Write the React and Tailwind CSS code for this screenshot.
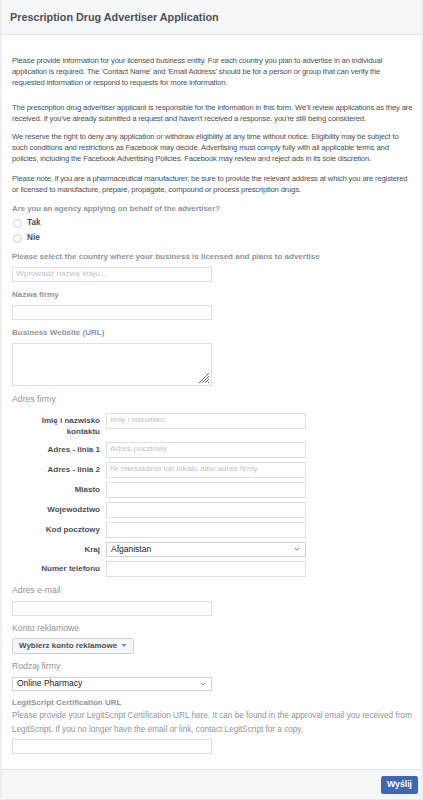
import { ChevronDown } from 'lucide-react';

const font = "font-['Liberation_Sans',Arial,sans-serif]";

const Label = ({ children, bold = true, size, className = '' }) => (
  <div
    className={`leading-[11px] text-[#90949c] ${bold ? 'font-bold' : ''} ${size || (bold ? 'text-[8px]' : 'text-[8.7px]')} ${className}`}
  >
    {children}
  </div>
);

const TextInput = ({ placeholder, h = 'h-[15px]' }) => (
  <div className={`w-[200px] ${h} border border-[#dddfe2] bg-white px-[3px] flex items-center text-[8.1px] text-[#bec3c9] overflow-hidden whitespace-nowrap`}>
    {placeholder}
  </div>
);

const SelectBox = ({ value, h = 'h-[15px]' }) => (
  <div className={`w-[200px] ${h} border border-[#ccd0d5] bg-white px-[4px] flex items-center justify-between text-[8.5px] text-[#1d2129]`}>
    <span>{value}</span>
    <ChevronDown size={8} strokeWidth={2.5} className="text-[#606770]" />
  </div>
);

const AddressRow = ({ label, placeholder, select }) => (
  <div className="flex items-start gap-[6px] mb-[4px]">
    <div className="w-[88px] shrink-0 text-right pt-[2px] text-[8px] leading-[11.5px] font-bold text-[#4b4f56]">{label}</div>
    {select ? <SelectBox value={select} /> : <TextInput placeholder={placeholder} h="h-[16px]" />}
  </div>
);

const Radio = ({ label }) => (
  <label className="flex items-center gap-[5px] h-[15px] pl-[1px]">
    <span className="w-[9px] h-[9px] rounded-full border border-[#ccd0d5] bg-white" />
    <span className="text-[8.2px] font-bold text-[#4b4f56]">{label}</span>
  </label>
);

export default function App() {
  return (
    <div className={`${font} w-[423px] h-[800px] bg-white border-x-2 border-[#eceef0] flex flex-col`}>
      {/* header */}
      <div className="h-[35px] shrink-0 bg-[#f6f7f9] border-b border-[#e5e5e5] px-[8px] flex items-center">
        <h1 className="text-[10.8px] font-bold text-[#4b4f56]">Prescription Drug Advertiser Application</h1>
      </div>

      {/* form body */}
      <div className="flex-1 pl-[10px] pr-[8px] pt-[19.5px] text-[#4b4f56]">
        <div className="text-[7.7px] leading-[11px] tracking-[-0.17px]">
          <p className="mb-[14px]">
            Please provide information for your licensed business entity. For each country you plan to advertise in an individual application is required. The 'Contact Name' and 'Email Address' should be for a person or group that can verify the requested information or respond to requests for more information.
          </p>
          <p className="mb-[7.5px]">
            The prescription drug advertiser applicant is responsible for the information in this form. We'll review applications as they are received. If you've already submitted a request and haven't received a response, you're still being considered.
          </p>
          <p className="mb-[8.5px]">
            We reserve the right to deny any application or withdraw eligibility at any time without notice. Eligibility may be subject to such conditions and restrictions as Facebook may decide. Advertising must comply fully with all applicable terms and policies, including the Facebook Advertising Policies. Facebook may review and reject ads in its sole discretion.
          </p>
          <p className="mb-[8px]">
            Please note, if you are a pharmaceutical manufacturer, be sure to provide the relevant address at which you are registered or licensed to manufacture, prepare, propagate, compound or process prescription drugs.
          </p>
        </div>

        <div className="mb-[5px]">
          <Label size="text-[7.8px]" className="mb-[2px]">Are you an agency applying on behalf of the advertiser?</Label>
          <Radio label="Tak" />
          <Radio label="Nie" />
        </div>

        <div className="mb-[7px]">
          <Label className="mb-[5px]">Please select the country where your business is licensed and plans to advertise</Label>
          <TextInput placeholder="Wprowadź nazwę kraju..." />
        </div>

        <div className="mb-[7px]">
          <Label className="mb-[5px]">Nazwa firmy</Label>
          <TextInput />
        </div>

        <div className="mb-[8px]">
          <Label className="mb-[5px]">Business Website (URL)</Label>
          <div className="relative w-[200px] h-[43px] border border-[#dddfe2] bg-white">
            <svg className="absolute right-[1px] bottom-[1px]" width="12" height="12" viewBox="0 0 12 12">
              <g stroke="#6b6b6b" strokeWidth="1">
                <line x1="11" y1="1" x2="1" y2="11" />
                <line x1="11" y1="4" x2="4" y2="11" />
                <line x1="11" y1="7" x2="7" y2="11" />
                <line x1="11" y1="10" x2="10" y2="11" />
              </g>
            </svg>
          </div>
        </div>

        <div className="mb-[8px]">
          <Label bold={false} className="mb-[8px]">Adres firmy</Label>
          <AddressRow label="Imię i nazwisko kontaktu" placeholder="Imię i nazwisko" />
          <AddressRow label="Adres - linia 1" placeholder="Adres pocztowy" />
          <AddressRow label="Adres - linia 2" placeholder="Nr mieszkania lub lokalu albo adres firmy" />
          <AddressRow label="Miasto" />
          <AddressRow label="Województwo" />
          <AddressRow label="Kod pocztowy" />
          <AddressRow label="Kraj" select="Afganistan" />
          <AddressRow label="Numer telefonu" />
        </div>

        <div className="mb-[7px]">
          <Label bold={false} className="mb-[5px]">Adres e-mail</Label>
          <TextInput />
        </div>

        <div className="mb-[7px]">
          <Label bold={false} className="mb-[4px]">Konto reklamowe</Label>
          <button className="h-[16px] pl-[6px] pr-[6px] flex items-center gap-[4px] bg-[#f5f6f7] border border-[#ccd0d5] rounded-[2px] text-[8px] font-bold text-[#4b4f56]">
            Wybierz konto reklamowe
            <span className="w-0 h-0 border-x-[3px] border-x-transparent border-t-[3px] border-t-[#90949c]" />
          </button>
        </div>

        <div className="mb-[6px]">
          <Label bold={false} className="mb-[5px]">Rodzaj firmy</Label>
          <SelectBox value="Online Pharmacy" h="h-[14px]" />
        </div>

        <div>
          <Label className="mb-[1.5px]">LegitScript Certification URL</Label>
          <p className="text-[8.2px] leading-[14px] text-[#90949c] mb-[1.5px]">
            Please provide your LegitScript Certification URL here. It can be found in the approval email you received from LegitScript. If you no longer have the email or link, contact LegitScript for a copy.
          </p>
          <TextInput />
        </div>
      </div>

      {/* footer */}
      <div className="h-[31px] shrink-0 bg-[#f6f7f9] border-y border-[#e5e5e5] flex items-center justify-end pr-[3px]">
        <button className="h-[18px] px-[5px] bg-[#4267b2] border border-[#4267b2] rounded-[2px] text-[8.7px] font-bold text-white">Wyślij</button>
      </div>
    </div>
  );
}
